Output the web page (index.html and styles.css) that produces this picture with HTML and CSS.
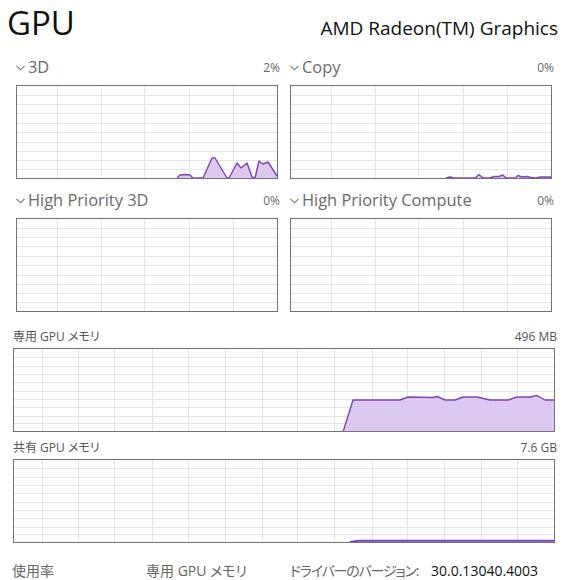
FILE: index.html
```html
<!DOCTYPE html>
<html lang="ja">
<head>
<meta charset="utf-8">
<link rel="stylesheet" href="styles.css">
</head>
<body>
<div class="page">
  <header class="top">
    <div class="title">GPU</div>
    <div class="device">AMD Radeon(TM) Graphics</div>
  </header>

  <section class="engines">
    <div class="panel">
      <div class="panel-head">
        <div class="panel-name"><svg class="chev" width="9" height="6" viewBox="0 0 9 6"><path d="M0.5 0.8 L4.5 4.8 L8.5 0.8" fill="none" stroke="#777" stroke-width="1.1"/></svg><span>3D</span></div>
        <div class="panel-value">2%</div>
      </div>
      <svg class="chart small" width="262" height="94" viewBox="0 0 262 94">
        <g class="grid">
          <line x1="41.5" y1="0" x2="41.5" y2="94"/><line x1="85.5" y1="0" x2="85.5" y2="94"/><line x1="128.5" y1="0" x2="128.5" y2="94"/><line x1="173.5" y1="0" x2="173.5" y2="94"/><line x1="217.5" y1="0" x2="217.5" y2="94"/>
          <line x1="0" y1="10.5" x2="262" y2="10.5"/><line x1="0" y1="19.5" x2="262" y2="19.5"/><line x1="0" y1="28.5" x2="262" y2="28.5"/><line x1="0" y1="38.5" x2="262" y2="38.5"/><line x1="0" y1="47.5" x2="262" y2="47.5"/><line x1="0" y1="57.5" x2="262" y2="57.5"/><line x1="0" y1="66.5" x2="262" y2="66.5"/><line x1="0" y1="75.5" x2="262" y2="75.5"/><line x1="0" y1="84.5" x2="262" y2="84.5"/>
        </g>
        <polygon class="area" points="161,93 164,90 169,89.5 174,90 177,93 187,93 196,73 199,73 211,93 213,93 221,78 225,83 231,78 236,92 239,93 243,76 247,79 252,77 261,91 261,93"/>
        <polyline class="line" points="161,93 164,90 169,89.5 174,90 177,93 187,93 196,73 199,73 211,93 213,93 221,78 225,83 231,78 236,92 239,93 243,76 247,79 252,77 261,91"/>
        <rect class="frame" x="0.5" y="0.5" width="261" height="93"/>
      </svg>
    </div>

    <div class="panel">
      <div class="panel-head">
        <div class="panel-name"><svg class="chev" width="9" height="6" viewBox="0 0 9 6"><path d="M0.5 0.8 L4.5 4.8 L8.5 0.8" fill="none" stroke="#777" stroke-width="1.1"/></svg><span>Copy</span></div>
        <div class="panel-value">0%</div>
      </div>
      <svg class="chart small" width="262" height="94" viewBox="0 0 262 94">
        <g class="grid">
          <line x1="41.5" y1="0" x2="41.5" y2="94"/><line x1="85.5" y1="0" x2="85.5" y2="94"/><line x1="128.5" y1="0" x2="128.5" y2="94"/><line x1="173.5" y1="0" x2="173.5" y2="94"/><line x1="217.5" y1="0" x2="217.5" y2="94"/>
          <line x1="0" y1="10.5" x2="262" y2="10.5"/><line x1="0" y1="19.5" x2="262" y2="19.5"/><line x1="0" y1="28.5" x2="262" y2="28.5"/><line x1="0" y1="38.5" x2="262" y2="38.5"/><line x1="0" y1="47.5" x2="262" y2="47.5"/><line x1="0" y1="57.5" x2="262" y2="57.5"/><line x1="0" y1="66.5" x2="262" y2="66.5"/><line x1="0" y1="75.5" x2="262" y2="75.5"/><line x1="0" y1="84.5" x2="262" y2="84.5"/>
        </g>
        <polygon class="area" points="156,93 160,92 164,93 185,93 189,89.5 193,93 200,93 204,91.5 209,91.5 213,90 216,93 225,93 228,90.5 232,92 237,91.5 241,92.5 246,93 250,92 261,92 261,93"/>
        <polyline class="line" points="156,93 160,92 164,93 185,93 189,89.5 193,93 200,93 204,91.5 209,91.5 213,90 216,93 225,93 228,90.5 232,92 237,91.5 241,92.5 246,93 250,92 261,92"/>
        <rect class="frame" x="0.5" y="0.5" width="261" height="93"/>
      </svg>
    </div>

    <div class="panel">
      <div class="panel-head">
        <div class="panel-name"><svg class="chev" width="9" height="6" viewBox="0 0 9 6"><path d="M0.5 0.8 L4.5 4.8 L8.5 0.8" fill="none" stroke="#777" stroke-width="1.1"/></svg><span>High Priority 3D</span></div>
        <div class="panel-value">0%</div>
      </div>
      <svg class="chart small" width="262" height="94" viewBox="0 0 262 94">
        <g class="grid">
          <line x1="41.5" y1="0" x2="41.5" y2="94"/><line x1="85.5" y1="0" x2="85.5" y2="94"/><line x1="128.5" y1="0" x2="128.5" y2="94"/><line x1="173.5" y1="0" x2="173.5" y2="94"/><line x1="217.5" y1="0" x2="217.5" y2="94"/>
          <line x1="0" y1="10.5" x2="262" y2="10.5"/><line x1="0" y1="19.5" x2="262" y2="19.5"/><line x1="0" y1="28.5" x2="262" y2="28.5"/><line x1="0" y1="38.5" x2="262" y2="38.5"/><line x1="0" y1="47.5" x2="262" y2="47.5"/><line x1="0" y1="57.5" x2="262" y2="57.5"/><line x1="0" y1="66.5" x2="262" y2="66.5"/><line x1="0" y1="75.5" x2="262" y2="75.5"/><line x1="0" y1="84.5" x2="262" y2="84.5"/>
        </g>
        <rect class="frame" x="0.5" y="0.5" width="261" height="93"/>
      </svg>
    </div>

    <div class="panel">
      <div class="panel-head">
        <div class="panel-name"><svg class="chev" width="9" height="6" viewBox="0 0 9 6"><path d="M0.5 0.8 L4.5 4.8 L8.5 0.8" fill="none" stroke="#777" stroke-width="1.1"/></svg><span>High Priority Compute</span></div>
        <div class="panel-value">0%</div>
      </div>
      <svg class="chart small" width="262" height="94" viewBox="0 0 262 94">
        <g class="grid">
          <line x1="41.5" y1="0" x2="41.5" y2="94"/><line x1="85.5" y1="0" x2="85.5" y2="94"/><line x1="128.5" y1="0" x2="128.5" y2="94"/><line x1="173.5" y1="0" x2="173.5" y2="94"/><line x1="217.5" y1="0" x2="217.5" y2="94"/>
          <line x1="0" y1="10.5" x2="262" y2="10.5"/><line x1="0" y1="19.5" x2="262" y2="19.5"/><line x1="0" y1="28.5" x2="262" y2="28.5"/><line x1="0" y1="38.5" x2="262" y2="38.5"/><line x1="0" y1="47.5" x2="262" y2="47.5"/><line x1="0" y1="57.5" x2="262" y2="57.5"/><line x1="0" y1="66.5" x2="262" y2="66.5"/><line x1="0" y1="75.5" x2="262" y2="75.5"/><line x1="0" y1="84.5" x2="262" y2="84.5"/>
        </g>
        <rect class="frame" x="0.5" y="0.5" width="261" height="93"/>
      </svg>
    </div>
  </section>

  <section class="memory">
    <div class="mem-head"><span>専用 GPU メモリ</span><span>496 MB</span></div>
    <svg class="chart wide" width="542" height="84" viewBox="0 0 542 84">
      <g class="grid">
        <line x1="29.5" y1="0" x2="29.5" y2="84"/><line x1="65.5" y1="0" x2="65.5" y2="84"/><line x1="101.5" y1="0" x2="101.5" y2="84"/><line x1="139.5" y1="0" x2="139.5" y2="84"/><line x1="175.5" y1="0" x2="175.5" y2="84"/><line x1="212.5" y1="0" x2="212.5" y2="84"/><line x1="249.5" y1="0" x2="249.5" y2="84"/><line x1="284.5" y1="0" x2="284.5" y2="84"/><line x1="321.5" y1="0" x2="321.5" y2="84"/><line x1="359.5" y1="0" x2="359.5" y2="84"/><line x1="394.5" y1="0" x2="394.5" y2="84"/><line x1="431.5" y1="0" x2="431.5" y2="84"/><line x1="468.5" y1="0" x2="468.5" y2="84"/><line x1="504.5" y1="0" x2="504.5" y2="84"/>
        <line x1="0" y1="9.5" x2="542" y2="9.5"/><line x1="0" y1="18.5" x2="542" y2="18.5"/><line x1="0" y1="26.5" x2="542" y2="26.5"/><line x1="0" y1="34.5" x2="542" y2="34.5"/><line x1="0" y1="43.5" x2="542" y2="43.5"/><line x1="0" y1="51.5" x2="542" y2="51.5"/><line x1="0" y1="59.5" x2="542" y2="59.5"/><line x1="0" y1="68.5" x2="542" y2="68.5"/><line x1="0" y1="75.5" x2="542" y2="75.5"/>
      </g>
      <polygon class="area" points="330,84 340,52 387,52 395,49 420,49.5 424,48.5 432,52 442,52 450,49 464,49 477,52 495,52 504,49 517,49 524,47.5 532,52 541,52 541,84"/>
      <polyline class="line" points="330,84 340,52 387,52 395,49 420,49.5 424,48.5 432,52 442,52 450,49 464,49 477,52 495,52 504,49 517,49 524,47.5 532,52 541,52"/>
      <rect class="frame" x="0.5" y="0.5" width="541" height="83"/>
    </svg>

    <div class="mem-head second"><span>共有 GPU メモリ</span><span>7.6 GB</span></div>
    <svg class="chart wide" width="542" height="84" viewBox="0 0 542 84">
      <g class="grid">
        <line x1="29.5" y1="0" x2="29.5" y2="84"/><line x1="65.5" y1="0" x2="65.5" y2="84"/><line x1="101.5" y1="0" x2="101.5" y2="84"/><line x1="139.5" y1="0" x2="139.5" y2="84"/><line x1="175.5" y1="0" x2="175.5" y2="84"/><line x1="212.5" y1="0" x2="212.5" y2="84"/><line x1="249.5" y1="0" x2="249.5" y2="84"/><line x1="284.5" y1="0" x2="284.5" y2="84"/><line x1="321.5" y1="0" x2="321.5" y2="84"/><line x1="359.5" y1="0" x2="359.5" y2="84"/><line x1="394.5" y1="0" x2="394.5" y2="84"/><line x1="431.5" y1="0" x2="431.5" y2="84"/><line x1="468.5" y1="0" x2="468.5" y2="84"/><line x1="504.5" y1="0" x2="504.5" y2="84"/>
        <line x1="0" y1="9.5" x2="542" y2="9.5"/><line x1="0" y1="18.5" x2="542" y2="18.5"/><line x1="0" y1="26.5" x2="542" y2="26.5"/><line x1="0" y1="34.5" x2="542" y2="34.5"/><line x1="0" y1="43.5" x2="542" y2="43.5"/><line x1="0" y1="51.5" x2="542" y2="51.5"/><line x1="0" y1="59.5" x2="542" y2="59.5"/><line x1="0" y1="68.5" x2="542" y2="68.5"/><line x1="0" y1="75.5" x2="542" y2="75.5"/>
      </g>
      <polygon class="area" points="337,83 345,81.6 541,81.6 541,83"/>
      <polyline class="line thin" points="337,83 345,81.8 541,81.8"/>
      <rect class="frame" x="0.5" y="0.5" width="541" height="83"/>
    </svg>
  </section>

  <footer class="stats">
    <span class="stat-label col1">使用率</span>
    <span class="stat-label col2">専用 GPU メモリ</span>
    <span class="stat-label col3">ドライバーのバージョン:</span>
    <span class="stat-value">30.0.13040.4003</span>
  </footer>
</div>
</body>
</html>
```

FILE: styles.css
```css
html, body {
  margin: 0;
  padding: 0;
  background: #ffffff;
}

body {
  font-family: "Open Sans", "Noto Sans", "Noto Sans CJK JP", sans-serif;
  font-feature-settings: "palt";
  color: #000;
  width: 586px;
  height: 580px;
  overflow: hidden;
}

.page {
  display: flex;
  flex-direction: column;
}

.top {
  height: 56px;
  box-sizing: border-box;
  display: flex;
  justify-content: space-between;
  align-items: baseline;
  padding: 3px 28px 0 7px;
}

.title {
  font-size: 33px;
  line-height: 40px;
  color: #111;
}

.device {
  font-size: 19px;
  line-height: 40px;
  color: #111;
}

.engines {
  display: grid;
  grid-template-columns: 262px 262px;
  column-gap: 12px;
  row-gap: 10px;
  padding-left: 16px;
}

.panel {
  display: flex;
  flex-direction: column;
}

.panel-head {
  height: 22px;
  margin-bottom: 7px;
  width: 264px;
  display: flex;
  justify-content: space-between;
  align-items: center;
}

.panel-name {
  display: flex;
  align-items: center;
  gap: 3px;
  font-size: 16.4px;
  color: #6a6a6a;
  line-height: 22px;
  white-space: nowrap;
}

.chev {
  display: block;
  margin-top: 1px;
}

.panel-value {
  font-size: 12px;
  color: #6a6a6a;
}

.chart {
  display: block;
}

.grid line {
  stroke: #e4e4e4;
  stroke-width: 1;
}

.frame {
  fill: none;
  stroke: #727272;
  stroke-width: 1;
}

.area {
  fill: #dcc9f2;
  stroke: none;
}

.line {
  fill: none;
  stroke: #8243b0;
  stroke-width: 1.4;
  stroke-linejoin: round;
}

.line.thin {
  stroke-width: 2;
}

.memory {
  display: flex;
  flex-direction: column;
  padding-left: 13px;
  margin-top: 16px;
}

.mem-head {
  width: 544px;
  height: 16px;
  margin-bottom: 4px;
  display: flex;
  justify-content: space-between;
  align-items: center;
  font-size: 12px;
  color: #555;
  white-space: nowrap;
}

.mem-head.second {
  margin-top: 7px;
}

.stats {
  display: flex;
  align-items: center;
  height: 20px;
  margin-top: 17px;
  padding-left: 12px;
  font-size: 14px;
  white-space: nowrap;
}

.stat-label {
  color: #666;
  flex: none;
}

.col1 { width: 134px; }
.col2 { width: 144px; }
.col3 { width: 141px; letter-spacing: -1.2px; }

.stat-value {
  color: #111;
  font-size: 14px;
}
```
